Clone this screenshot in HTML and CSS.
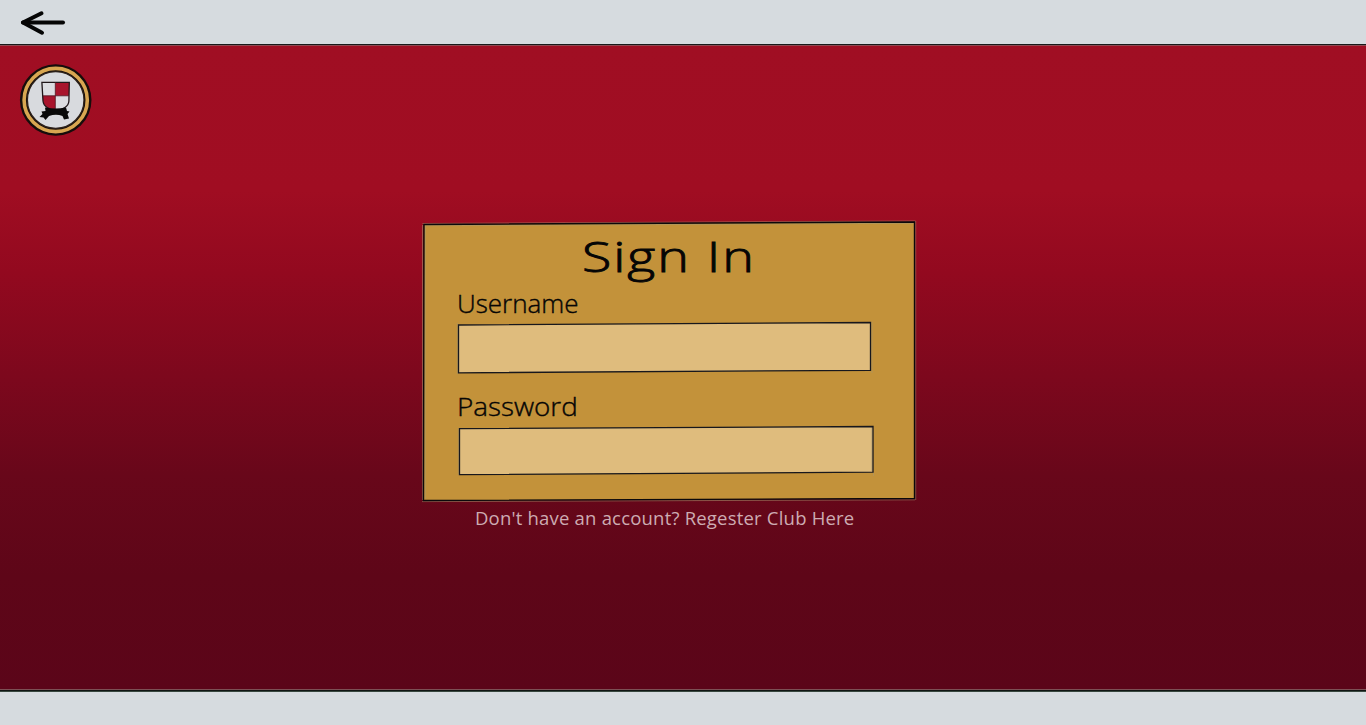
FILE: index.html
```html
<!DOCTYPE html>
<html lang="en">
<head>
<meta charset="utf-8">
<title>Sign In</title>
<link rel="stylesheet" href="styles.css">
</head>
<body>
<header class="topbar">
  <a class="back" href="#" aria-label="Back">
    <svg width="48" height="28" viewBox="0 0 48 28" fill="none" stroke="#050505" stroke-linecap="round" stroke-linejoin="round">
      <path d="M5 14.500H45" stroke-width="4"/>
      <path d="M23.500 5.300L5 14.500L24 24.700" stroke-width="4"/>
    </svg>
  </a>
</header>
<main class="stage">
  <svg class="crest" width="74" height="74" viewBox="0 0 74 74">
    <circle cx="36.700" cy="37" r="35.800" fill="#160d0b"/>
    <circle cx="36.700" cy="37" r="31.600" fill="none" stroke="#d8a651" stroke-width="3.600"/>
    <circle cx="36.700" cy="37" r="28.300" fill="#d8dade" stroke="#2c211a" stroke-width="1.300"/>
    <path d="M22.900 19.300H50.300L49.900 38C49.500 44 44 46 37 48C30 46 24.600 44 24 38Z" fill="#dcdde1"/>
    <path d="M36.300 19.300H50.300L49.900 32.800H36.300Z" fill="#a8142c"/>
    <path d="M23.600 32.800H36.300V48C30 46 24.600 44 24 38Z" fill="#a8142c"/>
    <path d="M22.900 19.300H50.300L49.900 38C49.500 44 44 46 37 48C30 46 24.600 44 24 38Z" fill="none" stroke="#20171a" stroke-width="1.300"/>
    <path d="M36.300 19V46M24 32.800H50" stroke="#511623" stroke-width=".8"/>
    <path d="M26 44.500Q37 46.500 47 44.500L48 48L50.500 48.500L48.500 51L50 55.500L45 56.500L43.500 53Q37 50.500 30 53L26.500 57L24.500 54.500L20.500 54L23.500 51L22.500 48.500L26.500 48Z" fill="#090909"/>
  </svg>
  <form class="card">
    <svg class="outline" viewBox="420 218 498 286" width="498" height="286">
      <path d="M424 224.500L914.500 222V498.500L423.500 500.500Z" fill="#c3923a"/>
      <path d="M425 225.800L913 223.300M425.300 226V499" class="halo"/>
      <path d="M422.500 223.500L915.500 221M915.700 221V500M422.500 225V500M422 501.600L915 499.800" class="halo"/>
      <path d="M424 224.500L914.500 222V498.500L423.500 500.500Z" class="ink"/>
    </svg>
    <h1 class="title"><span>Sign In</span></h1>
    <label class="label user" for="user"><span>Username</span></label>
    <div class="field">
      <svg class="outline" viewBox="455 319 422 58" width="422" height="58">
        <path d="M458.500 325L870.500 322.500V370.300L458.500 372.800Z" class="fill"/>
        <path d="M872 321.500V373M457.400 323V374" class="halo"/>
        <path d="M458.500 325L870.500 322.500V370.300L458.500 372.800Z" class="thin"/>
      </svg>
      <input id="user" type="text" class="input">
    </div>
    <label class="label pass" for="pass"><span>Password</span></label>
    <div class="field">
      <svg class="outline" viewBox="455 423 422 58" width="422" height="58">
        <path d="M459.500 428.700L873 426.500V472.200L459.500 474.600Z" class="fill"/>
        <path d="M871.800 427V471M873.500 472V476M458.400 428V475" class="halo"/>
        <path d="M459.500 428.700L873 426.500V472.200L459.500 474.600Z" class="thin"/>
      </svg>
      <input id="pass" type="password" class="input">
    </div>
  </form>
  <a class="register" href="#">Don't have an account? Regester Club Here</a>
</main>
<footer class="bottombar"></footer>
</body>
</html>
```
FILE: styles.css
```css
* { box-sizing: border-box; }
body {
  margin: 0;
  height: 725px;
  display: flex;
  flex-direction: column;
  overflow: hidden;
  font-family: "Open Sans", "Noto Sans", sans-serif;
  color: #050505;
}
.topbar {
  height: 46px;
  flex: none;
  background: #d6dbdf;
  border-bottom: 1px solid #8e4a52;
  box-shadow: inset 0 -1px #18191a;
  padding: 8px 0 0 18px;
}
.back { display: block; width: 48px; height: 28px; }
.back svg { display: block; }
.stage {
  flex: 1;
  display: flex;
  flex-direction: column;
  align-items: flex-start;
  background: linear-gradient(#a00e23 0, #a00d22 145px, #93091f 225px, #7d081d 330px, #68071a 430px, #5e0618 530px, #5b0519 100%);
}
.crest { flex: none; margin: 17px 0 0 19px; }
.card {
  position: relative;
  flex: none;
  width: 492px;
  height: 279px;
  margin: 85px 0 0 423px;
  padding: 10px 0 0 34px;
}
.outline { position: absolute; left: -3px; top: -4px; overflow: visible; fill: none; }
.field .outline { left: -2px; }
.ink { stroke: #0b090b; stroke-width: 1.4; }
.thin { stroke: #17171c; stroke-width: 1.3; }
.halo { stroke: #a7986f; stroke-width: 1; opacity: .55; }
.fill { fill: #dfbc7d; }
.title, .label { position: relative; margin: 0; display: block; white-space: nowrap; }
.title span, .label span { display: inline-block; transform-origin: 0 50%; }
.title {
  height: 56px;
  padding-left: 125px;
  font-size: 42px;
  font-weight: 300;
  line-height: 48px;
  -webkit-text-stroke: .9px #050505;
}
.title span { letter-spacing: 1.500px; transform: scaleX(1.28); }
.label {
  height: 35px;
  font-size: 26px;
  line-height: 31px;
  font-weight: 300;
  -webkit-text-stroke: .4px #050505;
}
.field { position: relative; width: 414px; height: 50px; }
.pass { height: 36px; margin-top: 18px; font-size: 26.500px; line-height: 30px; }
.pass span { transform: scaleX(1.05); }
.input {
  position: relative;
  display: block;
  width: 412px;
  height: 48px;
  border: 0;
  padding: 0 12px;
  background: transparent;
  font: inherit;
  font-size: 22px;
  outline: 0;
}
.register {
  margin: 4px 0 0 475px;
  font-size: 18.500px;
  letter-spacing: .2px;
  line-height: 26px;
  color: #cdacb2;
  text-decoration: none;
  white-space: nowrap;
}
.bottombar {
  height: 36px;
  flex: none;
  background: #d6dbdf;
  border-top: 1px solid #7d5055;
  box-shadow: inset 0 1px #101513, inset 0 2px #38483f;
}
```
